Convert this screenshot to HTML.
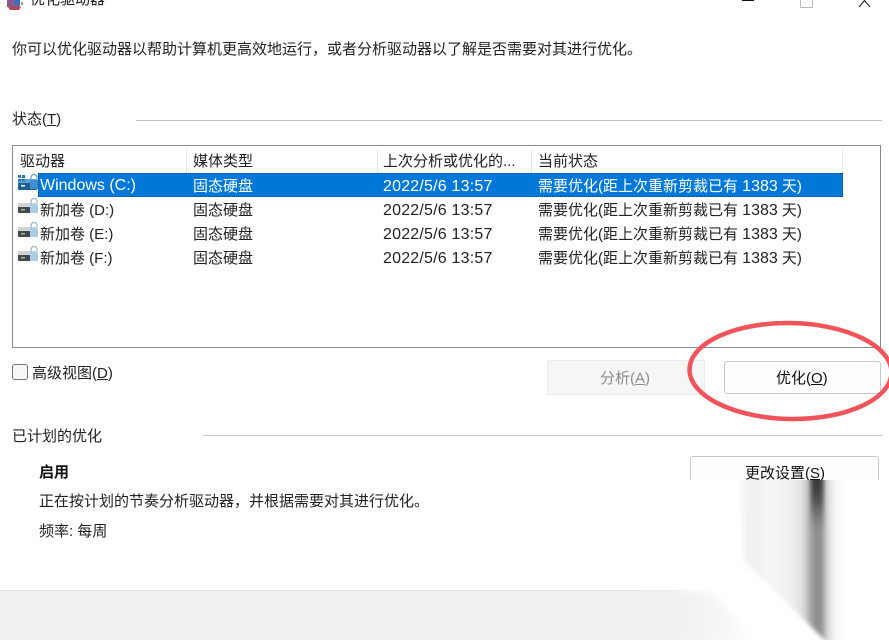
<!DOCTYPE html>
<html><head><meta charset="utf-8">
<style>
html,body{margin:0;padding:0;background:#fff}
body{width:889px;height:640px;position:relative;overflow:hidden;font-family:"Liberation Sans","Noto Sans CJK SC",sans-serif;font-size:15px;color:#222}
.t{position:absolute;white-space:nowrap;line-height:20px}
.a{position:absolute}
u{text-decoration:underline}
.n{font-size:16px;letter-spacing:.2px}
.m{font-size:16px}
</style></head><body>
<div class="a" style="left:0;top:590px;width:889px;height:50px;background:#f0f0f2;border-top:1px solid #e2e2e4;box-sizing:border-box"></div>

<svg class="a" style="left:6px;top:0" width="18" height="11" viewBox="0 0 18 11"><rect x="1" y="0" width="13" height="7" fill="#8a5a8c"/><rect x="8" y="0" width="6" height="5" fill="#3f6fb5"/><path d="M2 7h13l-2 3H4z" fill="#c0414f"/><rect x="15" y="2" width="2" height="3" fill="#8fa3b0"/></svg>
<div class="t" style="left:30px;top:-10px">优化驱动器</div>
<div class="a" style="left:742px;top:0;width:12px;height:1px;background:#111"></div>
<div class="a" style="left:800px;top:-5px;width:11px;height:11px;border:1px solid #bbb;border-radius:1px"></div>
<svg class="a" style="left:858px;top:0" width="14" height="8"><path d="M1 7L6.500 0.500L12 7" fill="none" stroke="#222" stroke-width="1.100"/></svg>

<div class="t" style="left:12px;top:40px">你可以优化驱动器以帮助计算机更高效地运行，或者分析驱动器以了解是否需要对其进行优化。</div>
<div class="t" style="left:12px;top:110px">状态(<u>T</u>)</div>
<div class="a" style="left:136px;top:120px;width:746px;height:1px;background:#c4c4c4"></div>

<div class="a" style="left:12px;top:145px;width:869px;height:203px;border:1px solid #8a8a8a;box-sizing:border-box;background:#fff"></div>
<div class="a" style="left:186px;top:149px;width:1px;height:24px;background:#e8e8e8"></div>
<div class="a" style="left:377px;top:149px;width:1px;height:24px;background:#e8e8e8"></div>
<div class="a" style="left:531px;top:149px;width:1px;height:24px;background:#e8e8e8"></div>
<div class="a" style="left:842px;top:149px;width:1px;height:24px;background:#e8e8e8"></div>
<div class="t" style="left:20px;top:152px">驱动器</div>
<div class="t" style="left:193px;top:152px">媒体类型</div>
<div class="t" style="left:383px;top:152px">上次分析或优化的...</div>
<div class="t" style="left:538px;top:152px">当前状态</div>

<div class="a" style="left:38px;top:173px;width:805px;height:24px;background:#0078d7;outline:1px dotted #0a4a80;outline-offset:-1px"></div>

<svg width="0" height="0" style="position:absolute"><defs>
<g id="d"><rect x="0" y="6" width="19" height="10" rx="1" fill="#44484d"/><rect x="0" y="6" width="19" height="4" fill="#cfd3d6"/><rect x="3" y="12" width="4" height="1.500" fill="#7fd07f"/><rect x="12" y="7" width="8" height="9" fill="#a9cde3"/><path d="M13 7V4.500a3 3 0 0 1 6 0V6" fill="none" stroke="#a7bccb" stroke-width="1.400"/></g>
</defs></svg>
<svg class="a" style="left:18px;top:173px" width="22" height="24"><rect x="0" y="6" width="19" height="11" rx="1" fill="#1f5f8f"/><rect x="0" y="6" width="19" height="4" fill="#5fa6d6"/><rect x="3" y="12" width="4" height="1.500" fill="#fff"/><rect x="12" y="7" width="8" height="9" fill="#3f8fd0"/><path d="M13 7V4.500a3 3 0 0 1 6 0V6" fill="none" stroke="#6aa9d6" stroke-width="1.400"/><rect x="0" y="2" width="3" height="3" fill="#2b78b8"/><rect x="4" y="2" width="3" height="3" fill="#2b78b8"/><rect x="0" y="6" width="3" height="2.500" fill="#2b78b8"/><rect x="4" y="6" width="3" height="2.500" fill="#2b78b8"/></svg>
<svg class="a" style="left:18px;top:197px" width="22" height="24"><use href="#d"/></svg>
<svg class="a" style="left:18px;top:221px" width="22" height="24"><use href="#d"/></svg>
<svg class="a" style="left:18px;top:245px" width="22" height="24"><use href="#d"/></svg>

<div class="t m" style="left:40px;top:176px;color:#fff">Windows (C:)</div>
<div class="t" style="left:193px;top:177px;color:#fff">固态硬盘</div>
<div class="t n" style="left:383px;top:177px;color:#fff">2022/5/6 13:57</div>
<div class="t" style="left:538px;top:177px;color:#fff">需要优化(距上次重新剪裁已有 <span class="m">1383</span> 天)</div>

<div class="t" style="left:40px;top:201px">新加卷 (D:)</div>
<div class="t" style="left:193px;top:201px">固态硬盘</div>
<div class="t n" style="left:383px;top:201px">2022/5/6 13:57</div>
<div class="t" style="left:538px;top:201px">需要优化(距上次重新剪裁已有 <span class="m">1383</span> 天)</div>

<div class="t" style="left:40px;top:225px">新加卷 (E:)</div>
<div class="t" style="left:193px;top:225px">固态硬盘</div>
<div class="t n" style="left:383px;top:225px">2022/5/6 13:57</div>
<div class="t" style="left:538px;top:225px">需要优化(距上次重新剪裁已有 <span class="m">1383</span> 天)</div>

<div class="t" style="left:40px;top:249px">新加卷 (F:)</div>
<div class="t" style="left:193px;top:249px">固态硬盘</div>
<div class="t n" style="left:383px;top:249px">2022/5/6 13:57</div>
<div class="t" style="left:538px;top:249px">需要优化(距上次重新剪裁已有 <span class="m">1383</span> 天)</div>

<div class="a" style="left:12px;top:364px;width:16px;height:16px;border:1px solid #777;border-radius:3px;background:#f6f6f6;box-sizing:border-box"></div>
<div class="t" style="left:32px;top:364px">高级视图(<u>D</u>)</div>

<div class="a" style="left:547px;top:360px;width:158px;height:35px;background:#f6f6f6;border:1px solid #ececec;box-sizing:border-box;border-radius:2px"></div>
<div class="t" style="left:600px;top:369px;color:#8c8c8c">分析(<u>A</u>)</div>
<div class="a" style="left:724px;top:361px;width:157px;height:33px;background:#fdfdfd;border:1px solid #c8c8c8;box-sizing:border-box;border-radius:3px"></div>
<div class="t" style="left:776px;top:369px;color:#111">优化(<u>O</u>)</div>

<svg class="a" style="left:680px;top:315px" width="209" height="115"><ellipse cx="110.500" cy="56" rx="101" ry="48" fill="none" stroke="#f0545a" stroke-width="4.500" transform="rotate(1 110 56)"/></svg>

<div class="t" style="left:12px;top:427px">已计划的优化</div>
<div class="a" style="left:203px;top:435px;width:679px;height:1px;background:#c8c8c8"></div>
<div class="t" style="left:39px;top:463px;font-weight:bold;color:#111">启用</div>
<div class="t" style="left:39px;top:492px">正在按计划的节奏分析驱动器，并根据需要对其进行优化。</div>
<div class="t" style="left:39px;top:522px">频率: 每周</div>

<div class="a" style="left:690px;top:456px;width:189px;height:40px;background:#fdfdfd;border:1px solid #c8c8c8;box-sizing:border-box;border-radius:3px"></div>
<div class="t" style="left:745px;top:464px;color:#111">更改设置(<u>S</u>)</div>

<svg class="a" style="left:640px;top:470px" width="249" height="170">
<defs>
<linearGradient id="s" gradientUnits="userSpaceOnUse" x1="96" x2="204" y1="0" y2="0">
<stop offset="0" stop-color="#fff"/><stop offset=".12" stop-color="#f0f0f0"/><stop offset=".2" stop-color="#f1f1f1"/><stop offset=".3" stop-color="#f6f6f6"/><stop offset=".5" stop-color="#f1f1f1"/><stop offset=".62" stop-color="#dedede"/><stop offset=".68" stop-color="#b0b0b0"/><stop offset=".74" stop-color="#8a8a8a"/><stop offset=".8" stop-color="#969696"/><stop offset=".85" stop-color="#dcdcdc"/><stop offset=".92" stop-color="#f6f6f6"/><stop offset="1" stop-color="#fff"/></linearGradient>
<linearGradient id="k" x1="0" x2="0" y1="0" y2="1"><stop offset="0" stop-color="#222" stop-opacity=".95"/><stop offset=".5" stop-color="#333" stop-opacity=".7"/><stop offset="1" stop-color="#555" stop-opacity="0"/></linearGradient>
<linearGradient id="g" gradientUnits="userSpaceOnUse" x1="25" x2="115" y1="0" y2="0"><stop offset="0" stop-color="#f0f0f2"/><stop offset=".6" stop-color="#f5f5f6"/><stop offset="1" stop-color="#fff"/></linearGradient>
<filter id="b" x="-20%" y="-5%" width="140%" height="110%"><feGaussianBlur stdDeviation="2.200"/></filter>
<filter id="b2" x="-30%" y="-30%" width="160%" height="160%"><feGaussianBlur stdDeviation="4"/></filter>
<clipPath id="c"><rect x="0" y="10" width="249" height="160"/></clipPath>
<clipPath id="c2"><rect x="0" y="120" width="249" height="50"/></clipPath>
</defs>
<rect x="40" y="10" width="209" height="160" fill="#fff"/>
<rect x="0" y="121" width="30" height="49" fill="#f0f0f2"/>
<g clip-path="url(#c2)"><path d="M-10 118H40L75 125L118 175H-10z" fill="url(#g)" filter="url(#b2)"/></g>
<g clip-path="url(#c)">
<path d="M98 0H205V175H190L103 90z" fill="url(#s)" filter="url(#b)"/>
<rect x="171" y="0" width="12" height="60" fill="url(#k)" filter="url(#b)"/>
</g>
</svg>
</body></html>
